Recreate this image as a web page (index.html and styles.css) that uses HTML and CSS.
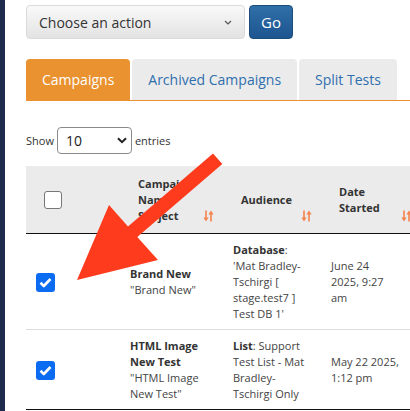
FILE: index.html
```html
<!DOCTYPE html>
<html lang="en">
<head>
<meta charset="utf-8">
<title>Campaigns</title>
<link rel="stylesheet" href="styles.css">
</head>
<body>
<div class="sidebar"></div>
<main class="main">
  <div class="actions">
    <div class="select action-select">
      <span>Choose an action</span>
      <svg class="chev-sm" width="8" height="5" viewBox="0 0 8 5"><path d="M1 1 L4 4 L7 1" fill="none" stroke="#555" stroke-width="1.2"/></svg>
    </div>
    <button class="go" type="button">Go</button>
  </div>

  <ul class="tabs">
    <li class="tab active">Campaigns</li>
    <li class="tab">Archived Campaigns</li>
    <li class="tab">Split Tests</li>
  </ul>

  <div class="length">
    <span>Show</span>
    <div class="select len-select">
      <span>10</span>
      <svg class="chev" width="10" height="7" viewBox="0 0 10 7"><path d="M1 1.2 L5 5.2 L9 1.2" fill="none" stroke="#222" stroke-width="2"/></svg>
    </div>
    <span>entries</span>
  </div>

  <table class="campaigns">
    <colgroup>
      <col class="c-check">
      <col class="c-name">
      <col class="c-aud">
      <col class="c-date">
    </colgroup>
    <thead>
      <tr>
        <th><span class="cb"></span></th>
        <th>Campaign Name / Subject<svg class="sort" width="11" height="12" viewBox="0 0 11 12"><path d="M3 0.5V9" stroke="#f5834e" stroke-width="1.6"/><path d="M0.4 7.4H5.6L3 11.6Z" fill="#f5834e"/><path d="M8 11.5V3" stroke="#f5834e" stroke-width="1.6"/><path d="M5.4 4.6H10.6L8 0.4Z" fill="#f5834e"/></svg></th>
        <th>Audience<svg class="sort" width="11" height="12" viewBox="0 0 11 12"><path d="M3 0.5V9" stroke="#f5834e" stroke-width="1.6"/><path d="M0.4 7.4H5.6L3 11.6Z" fill="#f5834e"/><path d="M8 11.5V3" stroke="#f5834e" stroke-width="1.6"/><path d="M5.4 4.6H10.6L8 0.4Z" fill="#f5834e"/></svg></th>
        <th>Date Started<svg class="sort" width="11" height="12" viewBox="0 0 11 12"><path d="M3 0.5V9" stroke="#f5834e" stroke-width="1.6"/><path d="M0.4 7.4H5.6L3 11.6Z" fill="#f5834e"/><path d="M8 11.5V3" stroke="#f5834e" stroke-width="1.6"/><path d="M5.4 4.6H10.6L8 0.4Z" fill="#f5834e"/></svg></th>
      </tr>
    </thead>
    <tbody>
      <tr>
        <td><span class="cb checked"><svg width="13" height="11" viewBox="0 0 13 11"><path d="M1.5 5.8 L4.8 9 L11.5 2" fill="none" stroke="#fff" stroke-width="2.6" stroke-linejoin="round"/></svg></span></td>
        <td><b>Brand New</b><br>"Brand New"</td>
        <td><b>Database</b>:<br>'Mat Bradley-Tschirgi [ stage.test7 ] Test DB 1'</td>
        <td>June 24 2025,&nbsp;9:27 am</td>
      </tr>
      <tr>
        <td><span class="cb checked"><svg width="13" height="11" viewBox="0 0 13 11"><path d="M1.5 5.8 L4.8 9 L11.5 2" fill="none" stroke="#fff" stroke-width="2.6" stroke-linejoin="round"/></svg></span></td>
        <td><b>HTML Image New Test</b><br>"HTML Image New Test"</td>
        <td><b>List</b>: Support Test List - Mat Bradley-Tschirgi Only</td>
        <td>May 22 2025, 1:12 pm</td>
      </tr>
    </tbody>
  </table>
</main>

<svg class="arrow" width="410" height="411" viewBox="0 0 410 411">
  <polygon points="213,153.5 222.3,164 137.3,236.9 158,260 77,280 109,205 128,226.4" fill="#ff3b1d"/>
</svg>
</body>
</html>
```

FILE: styles.css
```css
html, body {
  margin: 0;
  padding: 0;
}

body {
  display: flex;
  height: 411px;
  overflow: hidden;
  background: #fff;
  color: #333;
  font-family: "Open Sans", "DejaVu Sans", sans-serif;
}

.sidebar {
  flex: none;
  width: 5px;
  background: #1f2a4d;
}

.main {
  flex: 1;
  min-width: 0;
  padding: 5px 0 0 21px;
  overflow: hidden;
}

/* action bar */
.actions {
  display: flex;
  gap: 4px;
}

.select {
  box-sizing: border-box;
  display: flex;
  align-items: center;
  justify-content: space-between;
}

.action-select {
  width: 219px;
  height: 34px;
  padding: 0 12px;
  border: 1px solid #dadada;
  border-radius: 4px;
  background: linear-gradient(#f9f9f9, #e3e3e3);
  font-size: 14px;
  color: #333;
}

.go {
  width: 44px;
  height: 34px;
  padding: 0;
  border: 1px solid #1b4c7c;
  border-radius: 4px;
  background: linear-gradient(#2f6fa8, #1d5590);
  color: #fff;
  font-family: "Open Sans", sans-serif;
  font-size: 15px;
}

/* tabs */
.tabs {
  display: flex;
  gap: 2px;
  margin: 20px 0 0;
  padding: 0;
  list-style: none;
  border-bottom: 1px solid #e9922f;
}

.tab {
  display: flex;
  align-items: center;
  height: 41px;
  padding: 0 16px;
  border-radius: 4px 4px 0 0;
  background: #ebebeb;
  color: #2f6fae;
  font-size: 14px;
}

.tab.active {
  background: #e9922f;
  color: #fff;
}

/* length selector */
.length {
  display: flex;
  align-items: center;
  gap: 3px;
  margin-top: 26px;
  font-size: 11px;
}

.len-select {
  width: 75px;
  height: 27px;
  padding: 0 4px 0 8px;
  border: 1px solid #8a8a8a;
  border-radius: 4px;
  background: #fff;
  font-size: 14px;
  color: #222;
}

/* table */
.campaigns {
  margin-top: 12px;
  width: 395px;
  table-layout: fixed;
  border-collapse: collapse;
  font-size: 11px;
  line-height: 16px;
}

.c-check { width: 94px; }
.c-name { width: 103px; }
.c-aud { width: 98px; }
.c-date { width: 100px; }

.campaigns th {
  position: relative;
  padding: 10px 26px 9px 18px;
  background: #ebebeb;
  border-bottom: 1px solid #111;
  text-align: left;
  vertical-align: middle;
  font-weight: 700;
  color: #333;
}

.sort {
  position: absolute;
  right: 9px;
  bottom: 11px;
}

.campaigns td {
  padding: 8px 10px 7px;
  border-bottom: 1px solid #dcdcdc;
  vertical-align: middle;
  color: #444;
}

.campaigns tbody tr:last-child td {
  border-bottom-color: #111;
}

.campaigns td:nth-child(4) {
  padding-right: 20px;
}

.campaigns td b {
  color: #333;
}

.cb {
  box-sizing: border-box;
  display: flex;
  align-items: center;
  justify-content: center;
  width: 18px;
  height: 18px;
  border: 1px solid #777;
  border-radius: 3px;
  background: #fff;
}

.cb.checked {
  width: 19px;
  height: 19px;
  border: none;
  background: #0b6cf2;
}

.arrow {
  position: absolute;
  left: 0;
  top: 0;
  pointer-events: none;
}
```
